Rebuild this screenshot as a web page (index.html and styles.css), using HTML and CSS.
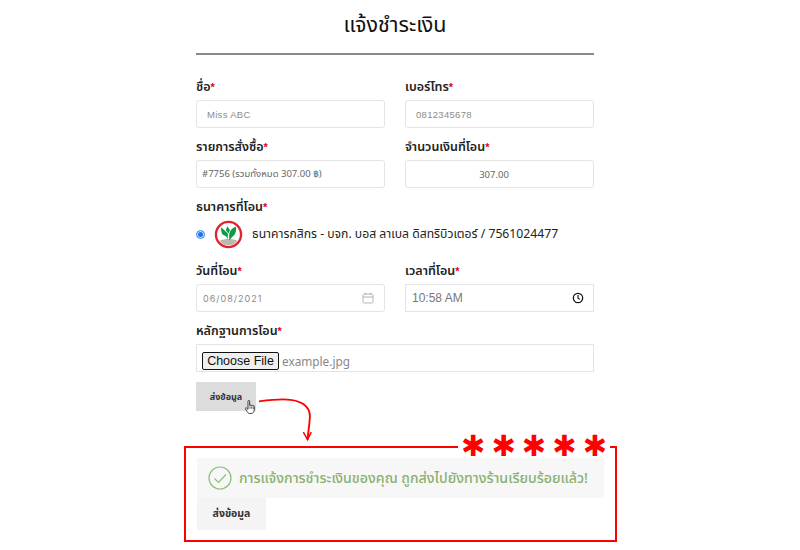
FILE: index.html
```html
<!DOCTYPE html>
<html lang="th">
<head>
<meta charset="utf-8">
<title>แจ้งชำระเงิน</title>
<link rel="stylesheet" href="styles.css">
</head>
<body>
<main class="page">
  <form class="form">
    <h1 class="title">แจ้งชำระเงิน</h1>
    <hr class="rule">
    <div class="grid">
      <div class="field">
        <label class="label">ชื่อ<span class="req">*</span></label>
        <div class="input input-name">Miss ABC</div>
      </div>
      <div class="field">
        <label class="label">เบอร์โทร<span class="req">*</span></label>
        <div class="input input-name">0812345678</div>
      </div>
      <div class="field">
        <label class="label">รายการสั่งซื้อ<span class="req">*</span></label>
        <div class="input input-order">#7756 (รวมทั้งหมด 307.00 ฿)</div>
      </div>
      <div class="field">
        <label class="label">จำนวนเงินที่โอน<span class="req">*</span></label>
        <div class="input input-amount">307.00</div>
      </div>
    </div>
    <div class="bank">
      <label class="label">ธนาคารที่โอน<span class="req">*</span></label>
      <div class="bank-row">
        <span class="radio"></span>
        <svg class="bank-logo" viewBox="0 0 30 30" aria-hidden="true">
          <circle cx="15" cy="15" r="13" fill="#fff" stroke="#e0242f" stroke-width="2.4"/>
          <path d="M6 21.500c3-2.500 15-2.500 18 0c-2.500 3.500-5.500 5-9 5s-6.500-1.500-9-5z" fill="#bdb8ac"/>
          <path d="M14.300 21c-.2-3.500-2.500-4.800-5.500-6c-1.200-2-1.600-4.500-1.300-7.500l6.800 6.500z" fill="#0f9a45"/>
          <path d="M15.700 21v-6.500c.8-4 3.400-6.300 7-7.500c.6 4.200-.4 8.300-3.500 10z" fill="#0f9a45"/>
          <path d="M13.800 6.500l2.700 3.800l-1.500 3.700l-2.800-3.500z" fill="#0f9a45"/>
        </svg>
        <span class="bank-text">ธนาคารกสิกร - บจก. บอส ลาเบล ดิสทริบิวเตอร์ / 7561024477</span>
      </div>
    </div>
    <div class="grid">
      <div class="field">
        <label class="label">วันที่โอน<span class="req">*</span></label>
        <div class="input input-date">
          <span>06/08/2021</span>
          <svg class="cal" viewBox="0 0 12 12" aria-hidden="true">
            <rect x="1" y="2" width="10" height="9" rx="1.200" fill="none" stroke="#b5b5b5"/>
            <path d="M1 5h10M3.500 .8v2M8.500 .8v2" stroke="#b5b5b5" fill="none"/>
          </svg>
        </div>
      </div>
      <div class="field">
        <label class="label">เวลาที่โอน<span class="req">*</span></label>
        <div class="input input-time">
          <span>10:58 AM</span>
          <svg class="clock" viewBox="0 0 12 12" aria-hidden="true">
            <circle cx="6" cy="6" r="4.700" fill="none" stroke="#111" stroke-width="1.200"/>
            <path d="M6 3v3.200l2 1.200" fill="none" stroke="#111" stroke-width="1.100"/>
          </svg>
        </div>
      </div>
    </div>
    <div class="field file-field">
      <label class="label">หลักฐานการโอน<span class="req">*</span></label>
      <div class="input input-file">
        <span class="file-btn">Choose File</span>
        <span class="file-name">example.jpg</span>
      </div>
    </div>
    <div class="submit">ส่งข้อมูล</div>
  </form>

  <section class="result">
    <div class="alert">
      <svg class="check" viewBox="0 0 24 24" aria-hidden="true">
        <circle cx="12" cy="12" r="11" fill="none" stroke="#8cc07a" stroke-width="1.200"/>
        <path d="M6.500 12.500l4 4l7.500-8" fill="none" stroke="#8cc07a" stroke-width="1.200"/>
      </svg>
      <span class="alert-text">การแจ้งการชำระเงินของคุณ ถูกส่งไปยังทางร้านเรียบร้อยแล้ว!</span>
    </div>
    <div class="submit-light">ส่งข้อมูล</div>
    <div class="stars"><span>✱</span><span>✱</span><span>✱</span><span>✱</span><span>✱</span></div>
  </section>

  <svg class="pointer" viewBox="0 0 18 24" aria-hidden="true">
    <path d="M4.500 2.500c0-1.600 2.500-1.600 2.500 0v6.500c.3-1.200 2.300-1.200 2.500.2c.4-1 2.200-.9 2.400.4c.5-.8 2-.5 2 .8v4.600c0 3.500-1.500 6-4.500 6h-2.500c-2 0-3-1.500-4.200-3.500l-2-3.400c-.8-1.300.8-2.300 1.800-1.200l2 2z" fill="#fff" stroke="#222" stroke-width="1.300"/>
    <path d="M7.500 10v4M10 10v4M12.500 10.500v4" stroke="#222" stroke-width="1" fill="none"/>
  </svg>
  <svg class="arrow" viewBox="0 0 60 46" aria-hidden="true">
    <path d="M0 3C12 1.500 25 0 34 1.500C50 3.500 55 12 54.500 20C54 30 52.500 36 52 44" fill="none" stroke="#f00" stroke-width="2"/>
    <path d="M47.500 36l4.500 8l4-8" fill="none" stroke="#f00" stroke-width="1.600"/>
  </svg>
</main>
</body>
</html>
```
FILE: styles.css
```css
html, body {
  margin: 0;
  padding: 0;
  background: #fff;
}

body {
  width: 800px;
  height: 550px;
  overflow: hidden;
  font-family: "Noto Sans", "Noto Sans Thai", "Liberation Sans", sans-serif;
  color: #222;
}

.page {
  position: relative;
  width: 800px;
  height: 550px;
  display: flex;
  flex-direction: column;
  align-items: flex-start;
}

.form {
  width: 398px;
  margin-left: 196px;
}

.title {
  margin: 9px 0 0;
  height: 30px;
  line-height: 30px;
  text-align: center;
  font-size: 21.500px;
  font-weight: 400;
  color: #111;
}

.rule {
  margin: 14px 0 0;
  height: 2px;
  border: 0;
  background: #8a8a8a;
}

.grid {
  display: grid;
  grid-template-columns: 189px 189px;
  column-gap: 20px;
  row-gap: 9px;
}

.form > .rule + .grid {
  margin-top: 22px;
}

.field {
  display: flex;
  flex-direction: column;
}

.label {
  display: block;
  height: 23px;
  line-height: 20px;
  font-size: 12.500px;
  font-weight: 600;
  color: #222;
}

.req {
  color: #e2001a;
  font-family: "Liberation Sans", sans-serif;
  font-size: 11px;
  font-weight: 700;
}

.input {
  box-sizing: border-box;
  height: 28px;
  border: 1px solid #e4e4e4;
  border-radius: 3px;
  background: #fff;
  display: flex;
  align-items: center;
  font-size: 9.500px;
  color: #8b8b8b;
}

.input-name {
  padding-left: 10px;
  font-family: "Liberation Sans", sans-serif;
  letter-spacing: .3px;
}

.input-order {
  padding-left: 5px;
  color: #666;
}

.input-amount {
  justify-content: center;
  color: #666;
  padding-right: 11px;
}

.bank {
  margin-top: 9px;
}

.bank .label {
  height: 20px;
}

.bank-row {
  display: flex;
  align-items: center;
  height: 34px;
}

.radio {
  box-sizing: border-box;
  width: 9px;
  height: 9px;
  border-radius: 50%;
  background: #1a73e8;
  border: 1px solid #5aa0f0;
  box-shadow: inset 0 0 0 1px #cfe2fb;
}

.bank-logo {
  width: 29px;
  height: 29px;
  margin-left: 9px;
}

.bank-text {
  margin-left: 9px;
  margin-top: -1px;
  font-size: 12.200px;
  color: #222;
}

.bank + .grid {
  margin-top: 10px;
}

.input-date {
  padding: 0 10px 0 6px;
  justify-content: space-between;
  font-family: "Inter", sans-serif;
  font-size: 9px;
  letter-spacing: 1px;
}

.cal {
  width: 12px;
  height: 12px;
}

.input-time {
  border-radius: 0;
  padding: 0 9px 0 6px;
  justify-content: space-between;
  font-size: 12px;
  font-family: "Liberation Sans", sans-serif;
  color: #777;
}

.clock {
  width: 12px;
  height: 12px;
}

.file-field {
  margin-top: 9px;
}

.input-file {
  border-radius: 0;
  padding: 0 0 1px 5px;
  align-items: flex-end;
  font-size: 11.800px;
}

.file-btn {
  box-sizing: border-box;
  width: 77px;
  height: 18px;
  display: flex;
  align-items: center;
  justify-content: center;
  border: 1.500px solid #111;
  border-radius: 2px;
  background: #efefef;
  color: #111;
  font-size: 12.500px;
  font-family: "Liberation Sans", sans-serif;
}

.file-name {
  margin-left: 3px;
  line-height: 18px;
  color: #888;
}

.submit {
  margin-top: 10px;
  width: 60px;
  height: 29px;
  background: #dcdcdc;
  display: flex;
  align-items: center;
  justify-content: center;
  font-size: 9px;
  font-weight: 700;
  color: #333;
}

.result {
  position: relative;
  box-sizing: border-box;
  width: 433px;
  height: 96px;
  margin: 35px 0 0 184px;
  border: 2px solid #f00;
  padding: 10px 11px;
}

.alert {
  width: 407px;
  height: 40px;
  box-sizing: border-box;
  padding-left: 11px;
  display: flex;
  align-items: center;
  background: #f7f7f7;
}

.check {
  width: 24px;
  height: 24px;
  flex: none;
}

.alert-text {
  margin-left: 7px;
  font-size: 14.200px;
  font-weight: 500;
  color: #8ab070;
  white-space: nowrap;
}

.submit-light {
  width: 69px;
  height: 32px;
  background: #f4f4f4;
  display: flex;
  align-items: center;
  justify-content: center;
  font-size: 10.500px;
  font-weight: 700;
  color: #333;
}

.stars {
  position: absolute;
  top: -17px;
  right: 5px;
  display: flex;
  height: 30px;
  line-height: 30px;
  background: linear-gradient(#fff 0 21px, transparent 21px);
  color: #f00;
  font-family: "DejaVu Sans", sans-serif;
  font-size: 29px;
  white-space: nowrap;
}

.stars span {
  width: 30.400px;
  text-align: center;
}

.pointer {
  position: absolute;
  left: 245px;
  top: 399px;
  width: 12px;
  height: 17px;
}

.arrow {
  position: absolute;
  left: 259px;
  top: 397px;
  width: 56px;
  height: 46px;
}
```
